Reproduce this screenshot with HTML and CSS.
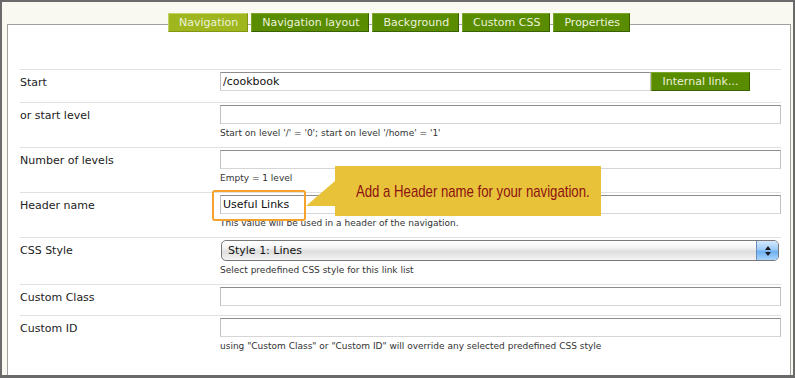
FILE: index.html
```html
<!DOCTYPE html>
<html lang="en">
<head>
  <meta charset="UTF-8" />
  <title>Navigation settings</title>
  <link rel="stylesheet" href="styles.css">
</head>
<body>

<div class="frame">
  <ul class="tabs">
    <li class="tab active">Navigation</li>
    <li class="tab">Navigation layout</li>
    <li class="tab">Background</li>
    <li class="tab">Custom CSS</li>
    <li class="tab">Properties</li>
  </ul>

  <div class="panel">
    <div class="row row-start">
      <label>Start</label>
      <div class="field">
        <div class="with-button">
          <input class="text-input" type="text" value="/cookbook">
          <button class="link-btn">Internal link...</button>
        </div>
      </div>
    </div>

    <div class="row">
      <label>or start level</label>
      <div class="field">
        <input class="text-input" type="text">
        <div class="help">Start on level '/' = '0'; start on level '/home' = '1'</div>
      </div>
    </div>

    <div class="row">
      <label>Number of levels</label>
      <div class="field">
        <input class="text-input" type="text">
        <div class="help">Empty = 1 level</div>
      </div>
    </div>

    <div class="row">
      <label>Header name</label>
      <div class="field">
        <input class="text-input" type="text" value="Useful Links">
        <div class="help">This value will be used in a header of the navigation.</div>
        <div class="highlight"></div>
        <div class="callout">
          <svg class="callout-tip" width="30" height="26" viewBox="0 0 30 26">
            <polygon points="0,25 29,0 30,0 30,25" fill="#e8c33a" />
          </svg>
          <span class="callout-text">Add a Header name for your navigation.</span>
        </div>
      </div>
    </div>

    <div class="row">
      <label>CSS Style</label>
      <div class="field">
        <div class="select">
          <span class="select-value">Style 1: Lines</span>
          <span class="select-arrows">
            <svg width="8" height="12" viewBox="0 0 8 12">
              <polygon points="4,1 7,5 1,5" fill="#1a1a1a" />
              <polygon points="1,7 7,7 4,11" fill="#1a1a1a" />
            </svg>
          </span>
        </div>
        <div class="help">Select predefined CSS style for this link list</div>
      </div>
    </div>

    <div class="row">
      <label>Custom Class</label>
      <div class="field">
        <input class="text-input" type="text">
      </div>
    </div>

    <div class="row">
      <label>Custom ID</label>
      <div class="field">
        <input class="text-input" type="text">
        <div class="help">using "Custom Class" or "Custom ID" will override any selected predefined CSS style</div>
      </div>
    </div>
  </div>
</div>

</body>
</html>
```

FILE: styles.css
```css
:root {
  --frame: rgb(106, 106, 106);
  --cream: rgb(249, 249, 242);
  --panel-border: rgb(160, 160, 160);
  --rule: rgb(226, 226, 220);
  --green: rgb(90, 140, 0);
  --green-light: rgb(124, 166, 40);
  --green-dark: rgb(58, 96, 0);
  --olive: rgb(160, 182, 30);
  --tab-text: rgb(236, 243, 220);
  --text: rgb(34, 34, 34);
}

html, body {
  margin: 0;
  height: 100%;
}

body {
  font-family: "DejaVu Sans", Verdana, sans-serif;
  color: var(--text);
  background: var(--cream);
}

.frame {
  box-sizing: border-box;
  height: 378px;
  overflow: hidden;
  border: 2px solid var(--frame);
  border-bottom-width: 3px;
  background: var(--cream);
  padding: 11px 2px 0 5px;
  display: flex;
  flex-direction: column;
}

.tabs {
  list-style: none;
  margin: 0;
  padding: 0;
  display: flex;
  justify-content: center;
  gap: 3px;
  position: relative;
  z-index: 1;
  height: 19px;
}

.tab {
  box-sizing: border-box;
  height: 19px;
  line-height: 17px;
  padding: 0 9px 0 10px;
  font-size: 11px;
  color: var(--tab-text);
  background: var(--green);
  border: 1px solid;
  border-color: var(--green-light) var(--green-dark) var(--green-dark) var(--green-light);
  white-space: nowrap;
}

.tab.active {
  background: var(--olive);
  border-color: rgb(196, 210, 100) rgb(130, 150, 20) rgb(130, 150, 20) rgb(196, 210, 100);
}

.panel {
  flex: 1;
  margin-top: -8px;
  background: #fff;
  border: 1px solid var(--panel-border);
  border-bottom: none;
  padding: 44px 9px 0 12px;
}

.row {
  display: grid;
  grid-template-columns: 200px 1fr;
  border-top: 1px solid var(--rule);
  padding: 2px 0 7px;
}

.row-start {
  padding-bottom: 11px;
}

.row label {
  font-size: 11px;
  line-height: 17px;
  padding-top: 2px;
}

.field {
  position: relative;
}

.text-input {
  display: block;
  box-sizing: border-box;
  width: 100%;
  height: 19px;
  margin: 0;
  padding: 0 2px;
  font-family: inherit;
  font-size: 11px;
  color: #111;
  background: #fff;
  border: 1px solid;
  border-color: rgb(140, 140, 140) rgb(192, 192, 192) rgb(214, 214, 214);
  outline: none;
}

.field > .text-input:last-child {
  margin-bottom: 2px;
}

.with-button {
  display: flex;
}

.with-button .text-input {
  flex: 0 0 431px;
}

.link-btn {
  box-sizing: border-box;
  width: 99px;
  height: 19px;
  margin: 0;
  padding: 0;
  font-family: inherit;
  font-size: 11px;
  color: var(--tab-text);
  background: var(--green);
  border: 1px solid;
  border-color: var(--green-light) var(--green-dark) var(--green-dark) var(--green-light);
}

.help {
  font-size: 9px;
  line-height: 13px;
  padding-top: 3px;
  color: #333;
}

.select {
  box-sizing: border-box;
  display: flex;
  align-items: center;
  width: calc(100% - 3px);
  height: 21px;
  margin-left: 1px;
  border: 1px solid rgb(120, 120, 120);
  border-radius: 5px;
  overflow: hidden;
  background: linear-gradient(#ffffff, #f4f4f4 35%, #dedede 55%, #ececec 85%, #f6f6f6);
  box-shadow: inset 0 1px 0 #fff;
}

.select-value {
  flex: 1;
  font-size: 11px;
  padding-left: 6px;
  color: #111;
}

.select-arrows {
  width: 21px;
  height: 100%;
  display: flex;
  align-items: center;
  justify-content: center;
  border-left: 1px solid rgb(110, 140, 190);
  background: linear-gradient(#d4e9fd, #9ccbf8 45%, #6fb0f2 55%, #a9d5fb);
}

.highlight {
  position: absolute;
  left: -8px;
  top: -5px;
  box-sizing: border-box;
  width: 94px;
  height: 31px;
  border: 2px solid rgb(246, 162, 46);
  border-radius: 3px;
}

.callout {
  position: absolute;
  left: 115px;
  top: -29px;
  box-sizing: border-box;
  width: 266px;
  height: 50px;
  padding: 17px 0 0 21px;
  background: rgb(232, 195, 58);
  color: rgb(140, 18, 18);
  font-family: "Liberation Sans", Arial, sans-serif;
  font-size: 17px;
  line-height: 18px;
  white-space: nowrap;
}

.callout-text {
  display: inline-block;
  transform: scaleX(0.775);
  transform-origin: left center;
}

.callout-tip {
  position: absolute;
  left: -29px;
  top: 15px;
}
```
